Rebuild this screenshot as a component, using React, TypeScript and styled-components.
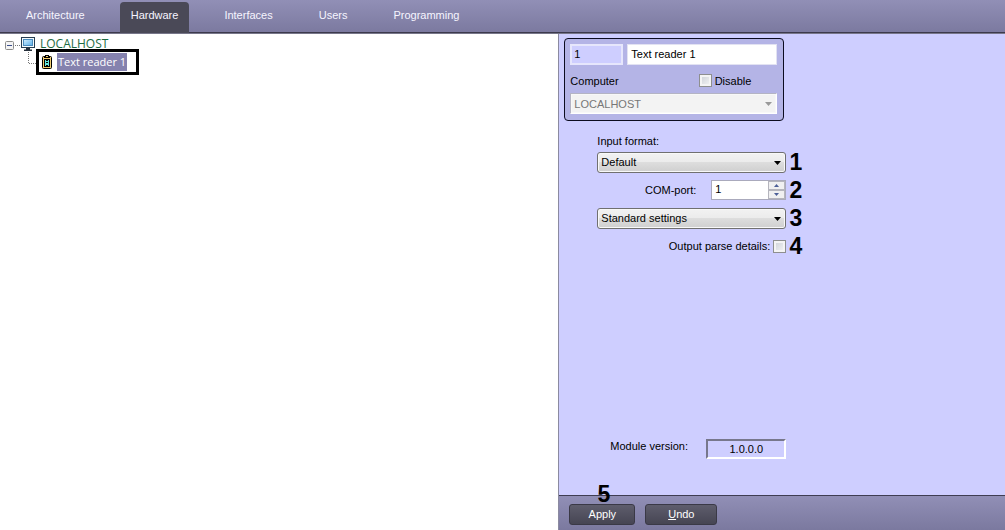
import React, { useState } from "react";
import styled, { createGlobalStyle } from "styled-components";

const GlobalStyle = createGlobalStyle`
  *, *::before, *::after { box-sizing: border-box; }
  body {
    margin: 0;
    background: #fff;
    color: #000;
    font: 11px/14px "Liberation Sans", Arial, sans-serif;
  }
  button, input, select { font: inherit; color: inherit; margin: 0; }
`;

const Page = styled.div`
  display: flex;
  flex-direction: column;
  min-height: 100vh;
`;

const TabBar = styled.nav`
  display: flex;
  align-items: flex-end;
  gap: 24px;
  height: 34px;
  padding-left: 15px;
  background: linear-gradient(#918fb6, #7b799f);
  border-bottom: 1px solid #77768a;
  box-shadow: inset 0 -1px 0 #3c3a4c;
`;

const Tab = styled.button<{ $active?: boolean }>`
  height: 31px;
  padding: 0 11px 5px;
  border: 0;
  border-radius: 4px 4px 0 0;
  background: ${(p) => (p.$active ? "#4a4957" : "transparent")};
  color: #f6f5ff;
`;

const Workspace = styled.main`
  flex: 1;
  display: grid;
  grid-template-columns: minmax(0, 5fr) minmax(0, 4fr);
`;

const TreePane = styled.section`
  padding: 3px 5px;
  background: #fff;
  font: 12px/16px "Open Sans", "Noto Sans", sans-serif;
`;

const TreeRow = styled.div`
  display: flex;
  align-items: center;
  height: 14px;
`;

const Expander = styled.button`
  display: flex;
  width: 16px;
  padding: 3px 0 0;
  border: 0;
  background: none;
`;

const HostName = styled.span`
  margin-left: 4px;
  color: #1d6b43;
`;

const ChildRow = styled.div`
  display: flex;
  align-items: flex-start;
  padding-left: 23px;
`;

const Highlight = styled.div`
  display: flex;
  align-items: center;
  width: 103px;
  height: 26px;
  margin-top: -2px;
  padding-left: 3px;
  border: 3px solid #000;
  background: #fff;
`;

const Selected = styled.span`
  height: 18px;
  margin-left: 5px;
  padding: 0 1px;
  background: #8582ae;
  color: #fff;
  font-size: 11px;
  line-height: 18px;
  white-space: nowrap;
`;

const SettingsPane = styled.section`
  display: flex;
  flex-direction: column;
  border-left: 1px solid #8b8aa0;
  background: #ceceff;
`;

const SettingsBody = styled.div`
  flex: 1;
  display: flex;
  flex-direction: column;
  align-items: flex-start;
  padding: 4px 5px 36px;
`;

const Identity = styled.div`
  display: flex;
  flex-direction: column;
  width: 220px;
  padding: 5px 6px 6px 5px;
  border: 1px solid #0c0c20;
  border-radius: 4px;
  background: #b4b4e6;
`;

const IdentityRow = styled.div`
  display: flex;
  align-items: center;
  gap: 4px;
`;

const TextInput = styled.input<{ $dim?: boolean }>`
  flex: ${(p) => (p.$dim ? "0 0 53px" : "1")};
  min-width: 0;
  height: 21px;
  padding: ${(p) => (p.$dim ? "0 2px 1px" : "0 3px 1px")};
  border: ${(p) => (p.$dim ? "2px solid #e6e6fc" : "1px solid #e2e2f2")};
  background: ${(p) => (p.$dim ? "#ceceff" : "#fff")};
`;

const ComputerRow = styled.div`
  display: flex;
  align-items: center;
  justify-content: space-between;
  height: 28px;
  padding: 3px 26px 0 0;
`;

const CheckLabel = styled.label`
  display: flex;
  align-items: center;
  gap: 3px;
`;

const Check = styled.input.attrs({ type: "checkbox" })`
  appearance: none;
  width: 13px;
  height: 13px;
  border: 1px solid #8e8f8f;
  background: linear-gradient(135deg, #cbcfd5, #f6f6f6);
  box-shadow: inset 0 0 0 2px #f4f4f4;
  &:checked { background: #4a4957; }
`;

const SelectBox = styled.div`
  position: relative;
  display: flex;
  svg {
    position: absolute;
    right: 5px;
    top: 9px;
    pointer-events: none;
  }
`;

const Select = styled.select`
  appearance: none;
  width: 100%;
  height: 21px;
  padding: 0 20px 0 3px;
  border: 1px solid #707070;
  border-radius: 3px;
  background: linear-gradient(#f2f2f2, #ebebeb 50%, #dddddd 50%, #cfcfcf);
  box-shadow: inset 0 0 0 1px #f8f8f8;
  &:disabled {
    border-color: #b4b4c4 #fff #fff #b4b4c4;
    border-radius: 0;
    background: #f3f3f3;
    color: #777;
    opacity: 1;
  }
`;

const Form = styled.div`
  display: flex;
  flex-direction: column;
  width: 241px;
  padding: 13px 0 0 33px;
`;

const FormRow = styled.div<{ $end?: boolean }>`
  display: flex;
  align-items: center;
  justify-content: ${(p) => (p.$end ? "flex-end" : "flex-start")};
  height: 28px;
  padding-right: ${(p) => (p.$end ? "19px" : "0")};
  ${SelectBox} { flex: 0 0 189px; }
`;

const FormLine = styled.div`
  position: relative;
`;

const Callout = styled.b`
  position: absolute;
  right: 0;
  top: 2px;
  width: 19px;
  text-align: center;
  font: bold 23px/24px "Liberation Sans", Arial, sans-serif;
`;

const ApplyCallout = styled(Callout)`
  right: auto;
  left: 24px;
  top: -23px;
  color: #000;
`;

const Spinner = styled.div`
  display: flex;
  width: 75px;
  height: 20px;
  margin-left: 15px;
  border: 1px solid #aaaabc;
  background: #fff;
`;

const SpinInput = styled.input`
  flex: 1;
  min-width: 0;
  padding: 0 3px 2px;
  border: 0;
  background: none;
  appearance: textfield;
  &::-webkit-inner-spin-button { display: none; }
`;

const SpinButtons = styled.div`
  display: flex;
  flex-direction: column;
  width: 17px;
`;

const SpinButton = styled.button`
  flex: 1;
  display: flex;
  align-items: center;
  justify-content: center;
  min-height: 0;
  padding: 0;
  border: 1px solid #b5b5bd;
  background: #f0f0f1;
`;

const VersionRow = styled.div`
  display: flex;
  align-items: center;
  justify-content: space-between;
  width: 222px;
  margin-top: auto;
  padding-left: 46px;
  label { padding-bottom: 6px; }
`;

const Version = styled.output`
  width: 80px;
  height: 20px;
  border: 2px solid;
  border-color: #77778c #fff #fff #77778c;
  text-align: center;
  line-height: 17px;
`;

const Footer = styled.footer`
  display: flex;
  gap: 10px;
  height: 35px;
  padding: 8px 10px 0;
  border-top: 1px solid #3f3d52;
  background: linear-gradient(#918fb6, #7b799f);
`;

const ActionButton = styled.button<{ $wide?: boolean }>`
  position: relative;
  width: ${(p) => (p.$wide ? "72px" : "66px")};
  height: 21px;
  padding: 0 0 1px;
  border: 1px solid #3a3946;
  border-radius: 3px;
  background: linear-gradient(#5e5d6c, #464553);
  color: #fff;
`;

const Arrow = ({ color = "#000" }: { color?: string }) => (
  <svg width="7" height="4" viewBox="0 0 7 4" aria-hidden="true">
    <path d="M0 0h7L3.5 4z" fill={color} />
  </svg>
);

const SpinArrow = ({ up }: { up?: boolean }) => (
  <svg width="5" height="3" viewBox="0 0 5 3" aria-hidden="true">
    <path d={up ? "M0 3h5L2.5 0z" : "M0 0h5L2.5 3z"} fill="#4c5f98" />
  </svg>
);

const ExpanderIcon = () => (
  <svg width="16" height="9" viewBox="0 0 16 9" aria-hidden="true">
    <rect x="0.5" y="0.5" width="8" height="8" rx="1" fill="#f4f4f4" stroke="#8c8c8c" />
    <path d="M2 4.5h5" stroke="#3c4f8c" />
    <path d="M10 4.5h6" stroke="#777" strokeDasharray="1 1" />
  </svg>
);

const MonitorIcon = () => (
  <svg width="15" height="14" viewBox="0 0 15 14" aria-hidden="true">
    <defs>
      <linearGradient id="screen" x2="1" y2="1">
        <stop stopColor="#d4efff" />
        <stop offset="1" stopColor="#5aaee8" />
      </linearGradient>
    </defs>
    <rect x="0.5" y="0.5" width="13" height="10" fill="#f4fafd" stroke="#263c50" />
    <rect x="2.5" y="2.5" width="9" height="6" fill="url(#screen)" stroke="#4a8dc0" />
    <path d="M5 11h4v1.5h2V14H3v-1.5h2z" fill="#26303c" />
  </svg>
);

const BranchIcon = () => (
  <svg width="8" height="14" viewBox="0 0 8 14" aria-hidden="true">
    <path d="M0.5 1v12M1 12.5h7" stroke="#777" strokeDasharray="1 1" fill="none" />
  </svg>
);

const ReaderIcon = () => (
  <svg width="10" height="14" viewBox="0 0 10 14" aria-hidden="true">
    <rect x="0.5" y="1.5" width="9" height="12" rx="1" fill="#f2cf72" stroke="#000" />
    <path d="M3 0h4v1h1v2H2V1h1z" fill="#000" />
    <path d="M4 1h2v1H4z" fill="#f2cf72" />
    <rect x="2" y="4" width="6" height="8" fill="#000" />
    <path d="M3 5h1v1h2V5h1v6H6v-1H4v1H3z" fill="#62e6dc" />
    <path d="M4 7h2v1H4z" fill="#000" />
  </svg>
);

const tabs = ["Architecture", "Hardware", "Interfaces", "Users", "Programming"];

export default function App() {
  const [active, setActive] = useState("Hardware");
  const [port, setPort] = useState(1);

  return (
    <>
      <GlobalStyle />
      <Page>
        <TabBar>
          {tabs.map((tab) => (
            <Tab key={tab} $active={tab === active} onClick={() => setActive(tab)}>
              {tab}
            </Tab>
          ))}
        </TabBar>
        <Workspace>
          <TreePane>
            <TreeRow>
              <Expander aria-label="Collapse"><ExpanderIcon /></Expander>
              <MonitorIcon />
              <HostName>LOCALHOST</HostName>
            </TreeRow>
            <ChildRow>
              <BranchIcon />
              <Highlight>
                <ReaderIcon />
                <Selected>Text reader 1</Selected>
              </Highlight>
            </ChildRow>
          </TreePane>
          <SettingsPane>
            <SettingsBody>
              <Identity>
                <IdentityRow>
                  <TextInput $dim readOnly aria-label="Number" defaultValue="1" />
                  <TextInput aria-label="Name" defaultValue="Text reader 1" />
                </IdentityRow>
                <ComputerRow>
                  <label htmlFor="computer">Computer</label>
                  <CheckLabel><Check />Disable</CheckLabel>
                </ComputerRow>
                <SelectBox>
                  <Select id="computer" disabled><option>LOCALHOST</option></Select>
                  <Arrow color="#999" />
                </SelectBox>
              </Identity>
              <Form>
                <label htmlFor="format">Input format:</label>
                <FormLine>
                  <FormRow>
                    <SelectBox>
                      <Select id="format"><option>Default</option></Select>
                      <Arrow />
                    </SelectBox>
                  </FormRow>
                  <Callout>1</Callout>
                </FormLine>
                <FormLine>
                  <FormRow $end>
                    <label htmlFor="port">COM-port:</label>
                    <Spinner>
                      <SpinInput id="port" type="number" value={port} onChange={(e) => setPort(Number(e.target.value))} />
                      <SpinButtons>
                        <SpinButton aria-label="Increase" onClick={() => setPort(port + 1)}><SpinArrow up /></SpinButton>
                        <SpinButton aria-label="Decrease" onClick={() => setPort(Math.max(1, port - 1))}><SpinArrow /></SpinButton>
                      </SpinButtons>
                    </Spinner>
                  </FormRow>
                  <Callout>2</Callout>
                </FormLine>
                <FormLine>
                  <FormRow>
                    <SelectBox>
                      <Select aria-label="Port settings"><option>Standard settings</option></Select>
                      <Arrow />
                    </SelectBox>
                  </FormRow>
                  <Callout>3</Callout>
                </FormLine>
                <FormLine>
                  <FormRow $end>
                    <CheckLabel>Output parse details:<Check /></CheckLabel>
                  </FormRow>
                  <Callout>4</Callout>
                </FormLine>
              </Form>
              <VersionRow>
                <label htmlFor="version">Module version:</label>
                <Version id="version">1.0.0.0</Version>
              </VersionRow>
            </SettingsBody>
            <Footer>
              <ActionButton>
                Apply
                <ApplyCallout>5</ApplyCallout>
              </ActionButton>
              <ActionButton $wide><u>U</u>ndo</ActionButton>
            </Footer>
          </SettingsPane>
        </Workspace>
      </Page>
    </>
  );
}
